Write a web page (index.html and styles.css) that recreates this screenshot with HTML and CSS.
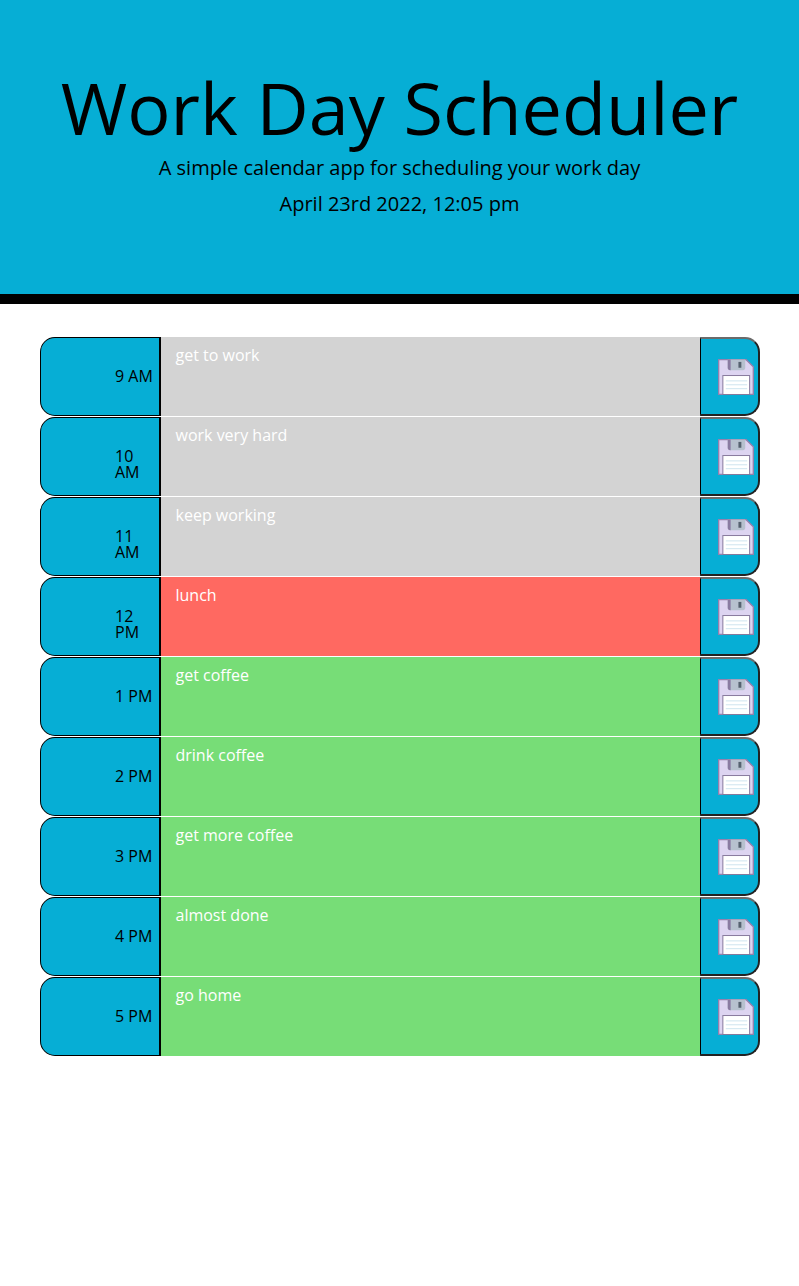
FILE: index.html
```html
<!DOCTYPE html>
<html lang="en">
<head>
    <meta charset="UTF-8">
    <meta name="viewport" content="width=device-width, initial-scale=1.0">
    <title>Work Day Scheduler</title>
    <link rel="stylesheet" href="styles.css">
</head>
<body>
    <svg class="iconDefs" width="0" height="0">
        <symbol id="diskIcon" viewBox="0 0 37 37">
            <path d="M.7 .7H29L36.300 8V36.300H.7Z" fill="#ddd4f1" stroke="#9480ad" stroke-width="1.400"/>
            <path d="M10 .5H28V9C28 10.500 27 11.500 25.500 11.500H12.500C11 11.500 10 10.500 10 9Z" fill="#b7c1ce"/>
            <path d="M10 .5H13V11.500H12.500C11 11.500 10 10.500 10 9Z" fill="#8a7ba2"/>
            <rect x="21" y="3" width="3" height="6" fill="#56626f"/>
            <rect x="5" y="17" width="27.500" height="19.500" fill="#fff" stroke="#85779b"/>
            <path d="M8 22.500H30M8 26.500H30M8 30.500H30" stroke="#cde3ef"/>
        </symbol>
    </svg>

    <header class="jumbotron">
        <h1 class="title">Work Day Scheduler</h1>
        <p class="lead">A simple calendar app for scheduling your work day</p>
        <p class="lead" id="currentDay">April 23rd 2022, 12:05 pm</p>
    </header>

    <div class="container">
        <div class="row">
            <div class="hour">9 AM</div>
            <textarea class="description past">get to work</textarea>
            <button class="saveBtn"><svg class="disk"><use href="#diskIcon"/></svg></button>
        </div>
        <div class="row">
            <div class="hour">10 AM</div>
            <textarea class="description past">work very hard</textarea>
            <button class="saveBtn"><svg class="disk"><use href="#diskIcon"/></svg></button>
        </div>
        <div class="row">
            <div class="hour">11 AM</div>
            <textarea class="description past">keep working</textarea>
            <button class="saveBtn"><svg class="disk"><use href="#diskIcon"/></svg></button>
        </div>
        <div class="row">
            <div class="hour">12 PM</div>
            <textarea class="description present">lunch</textarea>
            <button class="saveBtn"><svg class="disk"><use href="#diskIcon"/></svg></button>
        </div>
        <div class="row">
            <div class="hour">1 PM</div>
            <textarea class="description future">get coffee</textarea>
            <button class="saveBtn"><svg class="disk"><use href="#diskIcon"/></svg></button>
        </div>
        <div class="row">
            <div class="hour">2 PM</div>
            <textarea class="description future">drink coffee</textarea>
            <button class="saveBtn"><svg class="disk"><use href="#diskIcon"/></svg></button>
        </div>
        <div class="row">
            <div class="hour">3 PM</div>
            <textarea class="description future">get more coffee</textarea>
            <button class="saveBtn"><svg class="disk"><use href="#diskIcon"/></svg></button>
        </div>
        <div class="row">
            <div class="hour">4 PM</div>
            <textarea class="description future">almost done</textarea>
            <button class="saveBtn"><svg class="disk"><use href="#diskIcon"/></svg></button>
        </div>
        <div class="row">
            <div class="hour">5 PM</div>
            <textarea class="description future">go home</textarea>
            <button class="saveBtn"><svg class="disk"><use href="#diskIcon"/></svg></button>
        </div>
    </div>
</body>
</html>
```

FILE: styles.css
```css
body {
    margin: 0;
    min-height: 1286px;
    font-family: 'Open Sans', sans-serif;
    font-size: 16px;
    color: #000;
    background-color: #fff;
}

.iconDefs {
    display: block;
}

.jumbotron {
    box-sizing: content-box;
    height: 227px;
    padding-top: 67px;
    text-align: center;
    background-color: #06aed5;
    border-bottom: 10px solid #000;
}

.title {
    margin: 0 0 7px;
    font-size: 72px;
    font-weight: 400;
    line-height: 80px;
}

.lead {
    margin: 0 0 8px;
    font-size: 20px;
    line-height: 28px;
}

.container {
    display: grid;
    gap: 1px;
    margin: 33px 39px 0 40px;
}

.row {
    display: grid;
    grid-template-columns: 121px 539px 60px;
    height: 79px;
}

.hour {
    box-sizing: border-box;
    padding: 30px 2px 0 74px;
    line-height: 16px;
    background-color: #06aed5;
    border: 1px solid #000;
    border-right-width: 2px;
    border-radius: 15px 0 0 15px;
}

.description {
    display: block;
    box-sizing: border-box;
    margin: 0;
    padding: 8px 15px 8px 14.5px;
    font-family: inherit;
    font-size: 16px;
    line-height: 21px;
    color: #fff;
    border: none;
    outline: none;
    resize: none;
}

.past {
    background-color: #d3d3d3;
}

.present {
    background-color: #ff6961;
}

.future {
    background-color: #77dd77;
}

.saveBtn {
    display: flex;
    align-items: center;
    justify-content: flex-end;
    box-sizing: border-box;
    padding: 1px 4px 0 0;
    background-color: #06aed5;
    border: 2px solid #222;
    border-top-color: #6b6b6b;
    border-left: 1px solid #000;
    border-radius: 0 15px 15px 0;
    cursor: pointer;
}

.disk {
    display: block;
    width: 36px;
    height: 36px;
}
```
